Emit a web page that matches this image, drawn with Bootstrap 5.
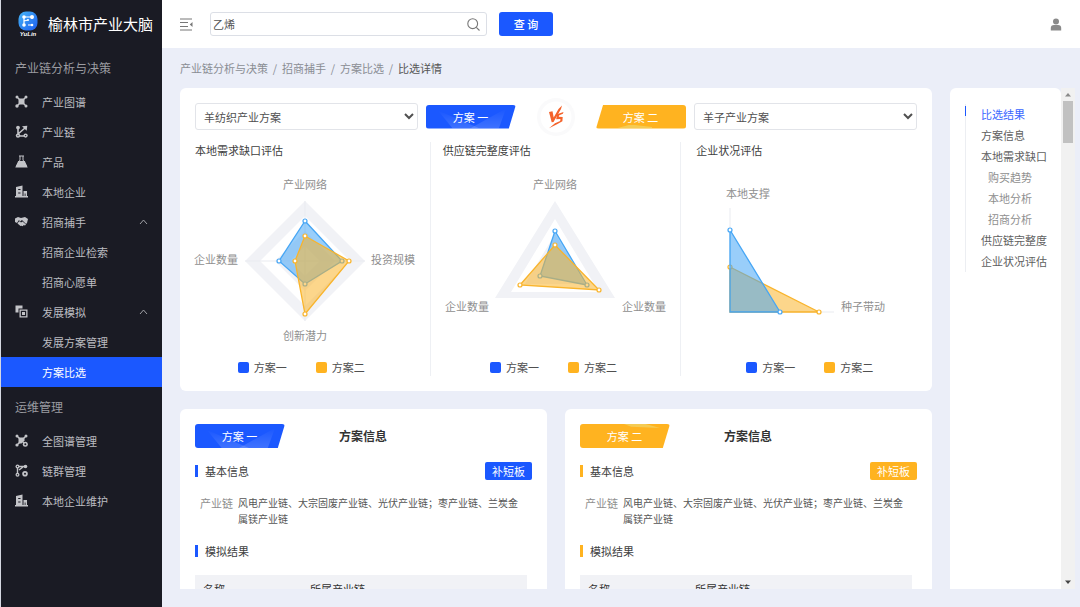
<!DOCTYPE html>
<html lang="zh-CN">
<head>
<meta charset="utf-8">
<meta name="viewport" content="width=device-width, initial-scale=1">
<title>榆林市产业大脑</title>
<link rel="stylesheet" href="https://cdn.jsdelivr.net/npm/bootstrap@5.3.0/dist/css/bootstrap.min.css">
<style>
  :root { --blue: #1b58ff; --amber: #ffb320; --ink: #505050; --muted: #8f8f8f; }
  body { font: 11px/16px "Noto Sans CJK SC", "Liberation Sans", sans-serif; color: var(--ink); background: #ebeef8; }
  a { color: inherit; text-decoration: none; }
  .shell { height: 100vh; overflow: hidden; }

  .sidebar { width: 162px; background: #1a1b24; border-left: 1px solid #d5d8e2; color: #bcbdc1; }
  .brand { height: 48px; padding-left: 16px; gap: 9px; color: #fff; font-size: 15px; line-height: 20px; }
  .brand-mark { width: 22px; }
  .brand-mark span { font: italic 700 6px/6px "Liberation Sans", sans-serif; }
  .group-title { height: 39px; padding-left: 14px; font-size: 12px; color: #9b9ca1; }
  .menu-link { height: 30px; padding: 0 14px 1px; }
  .menu-link svg.ico { width: 13px; height: 13px; margin-right: 14px; fill: #c3c4c8; stroke: none; }
  .menu-sub { padding-left: 41px; }
  .menu-link.current { background: var(--blue); color: #fff; }

  .topbar { height: 48px; padding: 0 18px; background: #fff; }
  .search { width: 277px; height: 24px; border: 1px solid #dcdfe6; border-radius: 3px; margin: 0 12px 0 17px; padding: 0 6px 0 2px; }
  .search input { font-size: 11px; color: #555; border: 0; outline: 0; padding: 0; min-width: 0; background: none; }
  .btn-query { width: 54px; height: 24px; padding: 0; font-size: 11px; line-height: 22px; font-weight: 500; color: #fff; background: var(--blue); border: 0; border-radius: 3px; }

  .crumbs { height: 40px; padding-left: 18px; color: #8a8d94; }
  .crumbs i { width: 14px; text-align: center; font-style: normal; }
  .crumbs span { color: #555; }

  .work { padding: 0 5px 18px 18px; min-height: 0; }
  .pane { overflow: hidden; margin-right: 18px; min-width: 0; }
  .panel { background: #fff; border-radius: 6px; padding: 15px; }
  .panel-gap { gap: 18px; margin-top: 18px; }

  .pick { gap: 8px; height: 27px; margin-bottom: 12px; }
  .pick select { height: 27px; flex: 1 1 0; min-width: 0; font-size: 11px; color: var(--ink); background: #fff; border: 1px solid #e2e4e9; border-radius: 3px; padding: 0 0 0 4px; }
  .versus { width: 64px; height: 27px; overflow: visible; }

  .plan-tag { width: 90px; height: 24px; color: #fff; border-radius: 3px; background: var(--blue); clip-path: polygon(0 0, 100% 0, 92% 100%, 0 100%); position: relative; padding-right: 1px; white-space: pre; }
  .plan-tag::before, .plan-tag::after { content: ""; position: absolute; background: linear-gradient(#fff0, #fff); opacity: .16; }
  .plan-tag::before { left: 12px; bottom: 0; width: 42px; height: 18px; clip-path: polygon(0 0, 100% 100%, 35% 100%); }
  .plan-tag::after { right: 10px; bottom: 0; width: 36px; height: 20px; clip-path: polygon(100% 0, 80% 100%, 0 100%); }
  .plan-tag.amber { background: var(--amber); }
  .plan-tag.amber::before { left: 20px; width: 36px; height: 4px; background: #e6f0a0; clip-path: polygon(40% 0, 100% 60%, 100% 100%, 0 100%); opacity: .4; }
  .plan-tag.amber::after { display: none; }
  .plan-tag.lean { clip-path: polygon(8% 0, 100% 0, 100% 100%, 0 100%); }
  .plan-tag.top::before { left: 44px; top: 0; bottom: auto; clip-path: polygon(0 0, 60% 0, 100% 100%, 20% 70%); }

  .charts { display: grid; grid-template-columns: 236fr 251fr 236fr; }
  .chart-col { border-right: 1px solid #eef0f4; padding: 0 18px 0 0; min-width: 0; }
  .chart-col + .chart-col { padding: 0 12px; }
  .chart-col:last-child { border-right: 0; padding: 0 0 0 15px; }
  .chart-name { color: #404040; }
  .chart-col svg { display: block; width: 220px; height: 180px; margin: 12px auto 9px; overflow: visible; }
  .chart-col text { font-size: 11px; fill: #8f8f8f; }
  .legend-key { gap: 29px; padding-bottom: 1px; padding-right: 4px; }
  .chart-col:last-child .legend-key { padding-left: 10px; }
  .legend-key b { width: 11px; height: 11px; border-radius: 2px; margin-right: 5px; }
  .fill-blue { background: var(--blue); }
  .fill-amber { background: var(--amber); }

  .info-head { margin-bottom: 14px; }
  .info-title { font-size: 12px; font-weight: 700; color: #333; margin: 0 0 0 54px; }
  .part { height: 18px; color: #404040; margin-bottom: 15px; }
  .part::before { content: ""; width: 3px; height: 12px; background: var(--accent); margin-right: 7px; }
  .part button { width: 47px; height: 18px; padding: 0; border: 0; border-radius: 2px; color: #fff; background: var(--accent); font-size: 11px; line-height: 16px; }
  .use-blue { --accent: var(--blue); }
  .use-amber { --accent: var(--amber); }
  .facts { padding: 0 10px 0 5px; gap: 5px; margin: 0 0 15px; }
  .facts dt { font-weight: 400; color: var(--muted); }
  .facts dd { font-size: 10px; margin: 0; color: #555; }
  .result { width: calc(100% - 5px); background: #f1f2f6; color: #333; }
  .result th { height: 28px; padding: 0 8px; font-weight: 400; }
  .result th:first-child { width: 107px; }

  .anchors { width: 111px; background: #fff; border-radius: 6px 6px 0 0; padding: 16px 0 0 15px; }
  .anchors nav { border-left: 1px solid #eceef2; position: relative; }
  .anchors nav::before { content: ""; position: absolute; left: -1px; top: 2px; width: 1px; height: 10px; background: var(--blue); }
  .anchors a { display: block; line-height: 21px; padding-left: 15px; color: #606060; white-space: nowrap; }
  .anchors a.inner { padding-left: 22px; color: #8f8f8f; }
  .anchors a.on { color: #3a66ff; }

  .scroll-rail { width: 14px; background: #f1f1f1; padding: 4px 2px; }
  .scroll-thumb { width: 10px; height: 42px; background: #c1c1c1; margin-top: 4px; }
</style>
</head>
<body>
<div class="shell d-flex">

  <aside class="sidebar flex-shrink-0">
    <div class="brand d-flex align-items-center text-nowrap">
      <div class="brand-mark d-flex flex-column align-items-center">
        <svg width="20" height="20" viewBox="0 0 20 20" aria-hidden="true">
          <defs><linearGradient id="lg" x1="0" y1="0" x2="1" y2="1"><stop offset="0" stop-color="#45b5f5"/><stop offset="1" stop-color="#1d5cf0"/></linearGradient></defs>
          <rect x=".5" y=".5" width="19" height="19" rx="7.5" fill="url(#lg)"/>
          <path d="M6 6h8M6 6v8M6 10l4-1M14 6v2M10 14h4" stroke="#fff" stroke-width="1.2" fill="none"/>
          <g fill="#fff"><circle cx="6" cy="6" r="1.8"/><circle cx="14" cy="6" r="2"/><circle cx="6" cy="14" r="1.8"/><circle cx="14" cy="14" r="1.3"/><circle cx="10" cy="9" r="1"/></g>
        </svg>
        <span>YuLin</span>
      </div>
      <span>榆林市产业大脑</span>
    </div>

    <div class="group-title d-flex align-items-center">产业链分析与决策</div>
    <nav>
      <a class="menu-link d-flex align-items-center" href="#"><svg class="ico" viewBox="0 0 13 13"><path d="M2 2l9 9M11 2l-9 9" stroke="#c3c4c8" stroke-width="1.3"/><rect x="3.5" y="3.5" width="6" height="6" rx="1"/><circle cx="2" cy="2" r="1.5"/><circle cx="11" cy="2" r="1.5"/><circle cx="2" cy="11" r="1.7"/><circle cx="11" cy="11" r="1.5"/></svg>产业图谱</a>
      <a class="menu-link d-flex align-items-center" href="#"><svg class="ico" viewBox="0 0 13 13"><path d="M3 3v8h7M3 9l7-6" stroke="#c3c4c8" stroke-width="1.6" fill="none"/><circle cx="3" cy="2.600" r="1.900"/><path d="M7 1.200L12.300.7l-.6 5z"/><circle cx="3" cy="10.600" r="2.200"/><circle cx="10.600" cy="10.600" r="2.100"/><g fill="#1a1b24"><circle cx="3" cy="10.600" r=".7"/><circle cx="10.600" cy="10.600" r=".7"/></g></svg>产业链</a>
      <a class="menu-link d-flex align-items-center" href="#"><svg class="ico" viewBox="0 0 13 13"><path d="M4 1h5M5 1v4L1.500 11h10L8 5V1" stroke="#c3c4c8" fill="none"/><path d="M3.200 6h6.600l2.900 6.500H.3z"/></svg>产品</a>
      <a class="menu-link d-flex align-items-center" href="#"><svg class="ico" viewBox="0 0 13 13"><path fill-rule="evenodd" d="M1 2l6.500-1.500V11h1V6h3.500v5h1v1.500H0V11h1zM3.200 4v1h2.300V4zm0 3.500v1h2.300v-1zm6.500 1V11h.8V8.500z"/></svg>本地企业</a>
      <a class="menu-link d-flex align-items-center" href="#"><svg class="ico" viewBox="0 0 13 13"><path d="M0 3.500L3 2l3 1 4-1 3 2-1 4-1 1-4-4-2 1.500L4 5 2 8 0 7z"/><path d="M2.500 8.500l1-1.500 1.200-.8L6 7.500l1.500-1L11 9.500l-1 1-1.500-.5-.5 1.200-1.500-.4-1 .2z"/></svg>招商捕手<svg class="ms-auto" width="9" height="6" viewBox="0 0 9 6"><path d="M1 5l3.500-4L8 5" stroke="#a0a1a6" fill="none"/></svg></a>
      <a class="menu-link menu-sub d-flex align-items-center" href="#">招商企业检索</a>
      <a class="menu-link menu-sub d-flex align-items-center" href="#">招商心愿单</a>
      <a class="menu-link d-flex align-items-center" href="#"><svg class="ico" viewBox="0 0 13 13"><path d="M.5.5h7v3h-4v4h-3z"/><path fill-rule="evenodd" d="M4.500 4.500h8v8h-8zm1.300 1.300v5.400h5.400V5.800zM7 7h3v3H7z"/></svg>发展模拟<svg class="ms-auto" width="9" height="6" viewBox="0 0 9 6"><path d="M1 5l3.500-4L8 5" stroke="#a0a1a6" fill="none"/></svg></a>
      <a class="menu-link menu-sub d-flex align-items-center" href="#">发展方案管理</a>
      <a class="menu-link menu-sub current d-flex align-items-center" href="#" aria-current="page">方案比选</a>
    </nav>

    <div class="group-title d-flex align-items-center">运维管理</div>
    <nav>
      <a class="menu-link d-flex align-items-center" href="#"><svg class="ico" viewBox="0 0 13 13"><path d="M2 2l8 8M11 2l-9 9" stroke="#c3c4c8" stroke-width="1.300"/><path d="M3.500 3.500h6v3l-3 3h-3z"/><circle cx="2" cy="2" r="1.500"/><circle cx="11" cy="2" r="1.500"/><circle cx="2" cy="11" r="1.600"/><circle cx="10.300" cy="10.300" r="2.500"/><circle cx="10.300" cy="10.300" r="1" fill="#1a1b24"/></svg>全图谱管理</a>
      <a class="menu-link d-flex align-items-center" href="#"><svg class="ico" viewBox="0 0 13 13"><path d="M2.500 2.500v8M2.500 2.500h8M4 6l4-3" stroke="#c3c4c8" stroke-width="1.400" fill="none"/><circle cx="2.500" cy="2.500" r="2"/><circle cx="10.500" cy="2.500" r="1.800"/><circle cx="2.500" cy="10.800" r="2"/><circle cx="10" cy="9.800" r="2.800"/><g fill="#1a1b24"><circle cx="10" cy="9.800" r="1"/><circle cx="2.500" cy="10.800" r=".7"/><circle cx="2.500" cy="2.500" r=".7"/></g></svg>链群管理</a>
      <a class="menu-link d-flex align-items-center" href="#"><svg class="ico" viewBox="0 0 13 13"><path fill-rule="evenodd" d="M1 2l6.500-1.500V11h1V6h3.500v5h1v1.500H0V11h1zM3.200 4v1h2.300V4zm0 3.500v1h2.300v-1zm6.500 1V11h.8V8.500z"/></svg>本地企业维护</a>
    </nav>
  </aside>

  <div class="flex-grow-1 d-flex flex-column min-w-0">
    <header class="topbar d-flex align-items-center flex-shrink-0">
      <svg width="13" height="13" viewBox="0 0 13 13" fill="none" stroke="#777" aria-hidden="true"><path d="M0 1h12M0 4.500h8M0 8.500h8M0 12h12"/><path d="M12.500 4v5L9.800 6.500z" fill="#777" stroke="none"/></svg>
      <div class="search d-flex align-items-center">
        <input class="flex-grow-1" type="text" value="乙烯" aria-label="搜索">
        <svg width="13" height="13" viewBox="0 0 13 13" fill="none" stroke="#777" stroke-width="1.100" aria-hidden="true"><circle cx="5.700" cy="5.700" r="4.900"/><path d="M9.300 9.300L12.500 12.500"/></svg>
      </div>
      <button class="btn btn-query" type="button">查 询</button>
      <svg class="ms-auto" width="12" height="13" viewBox="0 0 12 13" fill="#8a8a8a" role="img" aria-label="用户"><circle cx="6" cy="3.500" r="3"/><path d="M.8 12.500V10Q.8 7 4 7h4q3.200 0 3.200 3v2.500z"/></svg>
    </header>

    <nav class="crumbs d-flex align-items-center flex-shrink-0" aria-label="路径">
      <a href="#">产业链分析与决策</a><i>/</i><a href="#">招商捕手</a><i>/</i><a href="#">方案比选</a><i>/</i><span>比选详情</span>
    </nav>

    <div class="work d-flex flex-grow-1">
      <main class="pane flex-grow-1">
        <section class="panel">
          <div class="pick d-flex align-items-center">
            <select aria-label="方案一"><option>羊纺织产业方案</option></select>
            <div class="plan-tag d-flex align-items-center justify-content-center">方案 一</div>
            <svg class="versus" viewBox="0 0 64 27" role="img" aria-label="VS">
              <circle cx="32" cy="14" r="19" fill="#fafafb"/><circle cx="32" cy="14" r="15.500" fill="#fff"/>
              <g fill="#f4622a"><path d="M25 9l3.500-.8 1.200 6.300L34.500 6l3.500-3.500-1 3.500-7.500 13-1.800.3z"/><path d="M39.500 9l-.6 1.800-3.600 1.400-.6 1.600 4 .3-.3 4.200-5.400 3-8 4 6-5 5.200-2.400.2-1.800-4.200.2.800-5z"/></g>
            </svg>
            <div class="plan-tag amber lean d-flex align-items-center justify-content-center">方案 二</div>
            <select aria-label="方案二"><option>羊子产业方案</option></select>
          </div>

          <div class="charts">
            <div class="chart-col">
              <div class="chart-name">本地需求缺口评估</div>
              <svg viewBox="0 0 220 180">
                <path fill="#f1f2f6" fill-rule="evenodd" d="M110 31l60 60-60 60-60-60zM110 46l45 45-45 45-45-45zM110 61l30 30-30 30-30-30zM110 76l15 15-15 15-15-15z"/>
                <path stroke="#e9ebf0" d="M50 91h120M110 31v120"/>
                <path d="M110 51L147 91 110 114 84 91z" fill="#46a6f5" fill-opacity=".55" stroke="#46a6f5" stroke-width="1.300"/>
                <g fill="#fff" stroke="#46a6f5" stroke-width="1.200"><circle cx="110" cy="51" r="2"/><circle cx="147" cy="91" r="2"/><circle cx="110" cy="114" r="2"/><circle cx="84" cy="91" r="2"/></g>
                <path d="M110 66L154 91 110 144 100 91z" fill="#f9b42c" fill-opacity=".55" stroke="#f9b42c" stroke-width="1.300"/>
                <g fill="#fff" stroke="#f9b42c" stroke-width="1.200"><circle cx="110" cy="66" r="2"/><circle cx="154" cy="91" r="2"/><circle cx="110" cy="144" r="2"/><circle cx="100" cy="91" r="2"/></g>
                <text x="110" y="19" text-anchor="middle">产业网络</text><text x="110" y="170" text-anchor="middle">创新潜力</text>
                <text x="43" y="94" text-anchor="end">企业数量</text><text x="176" y="94">投资规模</text>
              </svg>
              <div class="legend-key d-flex justify-content-center"><span class="d-flex align-items-center"><b class="fill-blue"></b>方案一</span><span class="d-flex align-items-center"><b class="fill-amber"></b>方案二</span></div>
            </div>
            <div class="chart-col">
              <div class="chart-name">供应链完整度评估</div>
              <svg viewBox="0 0 220 180">
                <path fill="#f1f2f6" fill-rule="evenodd" d="M110 31L170 128H50zM110 49L154 122H66zM110 64L140 114H80z"/>
                <path d="M110 61L142 115 95 106z" fill="#46a6f5" fill-opacity=".55" stroke="#46a6f5" stroke-width="1.300"/>
                <g fill="#fff" stroke="#46a6f5" stroke-width="1.200"><circle cx="110" cy="61" r="2"/><circle cx="142" cy="115" r="2"/><circle cx="95" cy="106" r="2"/></g>
                <path d="M110 75L154 120 75 115z" fill="#f9b42c" fill-opacity=".55" stroke="#f9b42c" stroke-width="1.300"/>
                <g fill="#fff" stroke="#f9b42c" stroke-width="1.200"><circle cx="110" cy="75" r="2"/><circle cx="154" cy="120" r="2"/><circle cx="75" cy="115" r="2"/></g>
                <text x="110" y="19" text-anchor="middle">产业网络</text><text x="44" y="141" text-anchor="end">企业数量</text><text x="177" y="141">企业数量</text>
              </svg>
              <div class="legend-key d-flex justify-content-center"><span class="d-flex align-items-center"><b class="fill-blue"></b>方案一</span><span class="d-flex align-items-center"><b class="fill-amber"></b>方案二</span></div>
            </div>
            <div class="chart-col">
              <div class="chart-name">企业状况评估</div>
              <svg viewBox="0 0 220 180">
                <path stroke="#e9ebf0" fill="none" d="M33 38V142H137"/>
                <path d="M33 97L122 142H33z" fill="#f9b42c" fill-opacity=".55" stroke="#f9b42c" stroke-width="1.300"/>
                <g fill="#fff" stroke="#f9b42c" stroke-width="1.200"><circle cx="33" cy="97" r="2"/><circle cx="122" cy="142" r="2"/></g>
                <path d="M33 60L83 142H33z" fill="#46a6f5" fill-opacity=".55" stroke="#46a6f5" stroke-width="1.300"/>
                <g fill="#fff" stroke="#46a6f5" stroke-width="1.200"><circle cx="33" cy="60" r="2"/><circle cx="83" cy="142" r="2"/></g>
                <text x="29" y="28">本地支撑</text><text x="144" y="141">种子带动</text>
              </svg>
              <div class="legend-key d-flex justify-content-center"><span class="d-flex align-items-center"><b class="fill-blue"></b>方案一</span><span class="d-flex align-items-center"><b class="fill-amber"></b>方案二</span></div>
            </div>
          </div>
        </section>

        <div class="panel-gap d-flex">
          <section class="panel use-blue flex-fill w-50">
            <div class="info-head d-flex align-items-center">
              <div class="plan-tag d-flex align-items-center justify-content-center">方案 一</div>
              <h2 class="info-title">方案信息</h2>
            </div>
            <div class="part d-flex align-items-center">基本信息<button class="ms-auto" type="button">补短板</button></div>
            <dl class="facts d-flex"><dt class="flex-shrink-0">产业链</dt><dd>风电产业链、大宗固废产业链、光伏产业链；枣产业链、兰炭金属镁产业链</dd></dl>
            <div class="part d-flex align-items-center">模拟结果</div>
            <table class="result"><thead><tr><th>名称</th><th>所属产业链</th></tr></thead></table>
          </section>
          <section class="panel use-amber flex-fill w-50">
            <div class="info-head d-flex align-items-center">
              <div class="plan-tag amber top d-flex align-items-center justify-content-center">方案 二</div>
              <h2 class="info-title">方案信息</h2>
            </div>
            <div class="part d-flex align-items-center">基本信息<button class="ms-auto" type="button">补短板</button></div>
            <dl class="facts d-flex"><dt class="flex-shrink-0">产业链</dt><dd>风电产业链、大宗固废产业链、光伏产业链；枣产业链、兰炭金属镁产业链</dd></dl>
            <div class="part d-flex align-items-center">模拟结果</div>
            <table class="result"><thead><tr><th>名称</th><th>所属产业链</th></tr></thead></table>
          </section>
        </div>
      </main>

      <aside class="anchors flex-shrink-0">
        <nav>
          <a class="on" href="#">比选结果</a><a href="#">方案信息</a><a href="#">本地需求缺口</a>
          <a class="inner" href="#">购买趋势</a><a class="inner" href="#">本地分析</a><a class="inner" href="#">招商分析</a>
          <a href="#">供应链完整度</a><a href="#">企业状况评估</a>
        </nav>
      </aside>
      <div class="scroll-rail d-flex flex-column align-items-center flex-shrink-0" aria-hidden="true">
        <svg width="6" height="5" viewBox="0 0 6 5"><path d="M0 4.500L3 1l3 3.500z" fill="#8a8a8a"/></svg>
        <div class="scroll-thumb"></div>
        <svg class="mt-auto" width="6" height="5" viewBox="0 0 6 5"><path d="M0 .5L3 4 6 .5z" fill="#444"/></svg>
      </div>
    </div>
  </div>
</div>
<script src="https://cdn.jsdelivr.net/npm/bootstrap@5.3.0/dist/js/bootstrap.bundle.min.js"></script>
</body>
</html>
